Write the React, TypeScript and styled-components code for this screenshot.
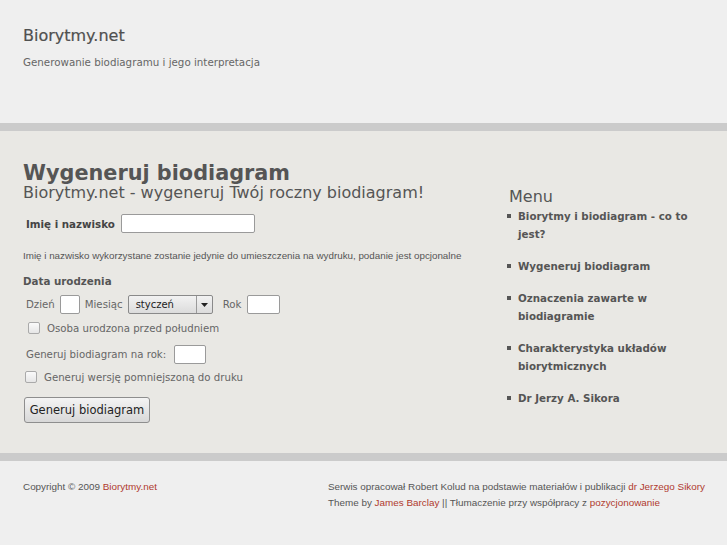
import React from "react";
import styled, { createGlobalStyle } from "styled-components";

const GlobalStyle = createGlobalStyle`
  html, body {
    margin: 0;
    padding: 0;
    background: #efefef;
    font-family: "DejaVu Sans", "Liberation Sans", sans-serif;
    color: #555;
  }
`;

const menuItems = [
  "Biorytmy i biodiagram - co to jest?",
  "Wygeneruj biodiagram",
  "Oznaczenia zawarte w biodiagramie",
  "Charakterystyka układów biorytmicznych",
  "Dr Jerzy A. Sikora",
];

export default function App() {
  return (
    <Page>
      <GlobalStyle />
      <Header>
        <SiteTitle>Biorytmy.net</SiteTitle>
        <SiteTagline>Generowanie biodiagramu i jego interpretacja</SiteTagline>
      </Header>

      <Main>
        <Content>
          <Title>Wygeneruj biodiagram</Title>
          <Subtitle>Biorytmy.net - wygeneruj Twój roczny biodiagram!</Subtitle>

          <NameRow>
            <BoldLabel>Imię i nazwisko</BoldLabel>
            <TextInput $width={134} />
          </NameRow>
          <Note>
            Imię i nazwisko wykorzystane zostanie jedynie do umieszczenia na wydruku, podanie jest opcjonalne
          </Note>

          <SectionLabel>Data urodzenia</SectionLabel>
          <FieldRow $top={8}>
            <Label>Dzień</Label>
            <TextInput $width={20} />
            <Label>Miesiąc</Label>
            <Select>
              <SelectValue>styczeń</SelectValue>
              <SelectArrow>
                <svg width="7" height="4" viewBox="0 0 7 4">
                  <path d="M0 0h7L3.5 4z" fill="#222" />
                </svg>
              </SelectArrow>
            </Select>
            <Label $gap={5}>Rok</Label>
            <TextInput $width={33} $gap={1} />
          </FieldRow>

          <CheckRow $indent={5} $top={8}>
            <Checkbox />
            <Label>Osoba urodzona przed południem</Label>
          </CheckRow>

          <FieldRow $top={11}>
            <Label>Generuj biodiagram na rok:</Label>
            <TextInput $width={32} $gap={3} />
          </FieldRow>

          <CheckRow $indent={2} $top={7}>
            <Checkbox />
            <Label>Generuj wersję pomniejszoną do druku</Label>
          </CheckRow>

          <Button>Generuj biodiagram</Button>
        </Content>

        <Sidebar>
          <MenuTitle>Menu</MenuTitle>
          <MenuList>
            {menuItems.map((item) => (
              <MenuItem key={item}>
                <Bullet />
                <MenuLink>{item}</MenuLink>
              </MenuItem>
            ))}
          </MenuList>
        </Sidebar>
      </Main>

      <Footer>
        <FooterText>
          Copyright © 2009 <FooterLink>Biorytmy.net</FooterLink>
        </FooterText>
        <FooterRight>
          <FooterText>
            Serwis opracował Robert Kolud na podstawie materiałów i publikacji{" "}
            <FooterLink>dr Jerzego Sikory</FooterLink>
          </FooterText>
          <FooterText>
            Theme by <FooterLink>James Barclay</FooterLink> || Tłumaczenie przy współpracy z{" "}
            <FooterLink>pozycjonowanie</FooterLink>
          </FooterText>
        </FooterRight>
      </Footer>
    </Page>
  );
}

const Page = styled.div`
  width: 727px;
  min-height: 545px;
  background: #efefef;
`;

const Header = styled.header`
  height: 97px;
  padding: 26px 23px 0;
  border-bottom: 8px solid #cbcbcb;
`;

const SiteTitle = styled.div`
  font-size: 16px;
  line-height: 19px;
  color: #505050;
  -webkit-text-stroke: 0.2px #505050;
`;

const SiteTagline = styled.div`
  margin-top: 11px;
  font-size: 10.3px;
  line-height: 12px;
  color: #666;
`;

const Main = styled.main`
  display: flex;
  background: #e9e8e4;
  height: 296px;
  padding: 26px 0 0 23px;
  border-bottom: 8px solid #cbcbcb;
`;

const Content = styled.div`
  width: 480px;
  padding-top: 4px;
  display: flex;
  flex-direction: column;
  align-items: flex-start;
`;

const Title = styled.h1`
  margin: 0;
  font-size: 20.8px;
  line-height: 24px;
  font-weight: bold;
  color: #555;
`;

const Subtitle = styled.h2`
  margin: -2px 0 0;
  font-size: 16px;
  line-height: 19px;
  font-weight: normal;
  color: #555;
`;

const NameRow = styled.div`
  display: flex;
  align-items: center;
  gap: 6px;
  margin: 12px 0 0 3px;
`;

const BoldLabel = styled.span`
  font-size: 10.3px;
  font-weight: bold;
  color: #444;
`;

const Label = styled.span<{ $gap?: number }>`
  font-size: 10.2px;
  color: #666;
  margin-left: ${(p) => p.$gap ?? 0}px;
`;

const TextInput = styled.span<{ $width: number; $gap?: number }>`
  display: inline-block;
  width: ${(p) => p.$width}px;
  height: 19px;
  margin-left: ${(p) => p.$gap ?? 0}px;
  box-sizing: border-box;
  background: #fff;
  border: 1px solid #9a9a9a;
  border-radius: 2px;
`;

const Note = styled.p`
  margin: 17px 0 0;
  font-family: "Liberation Sans", sans-serif;
  font-size: 9.8px;
  line-height: 12px;
  color: #555;
`;

const SectionLabel = styled.div`
  margin-top: 13px;
  font-size: 10.3px;
  line-height: 12px;
  font-weight: bold;
  color: #555;
`;

const FieldRow = styled.div<{ $top: number }>`
  display: flex;
  align-items: center;
  gap: 5px;
  margin: ${(p) => p.$top}px 0 0 3px;
`;

const Select = styled.span`
  display: inline-flex;
  width: 85px;
  height: 19px;
  box-sizing: border-box;
  border: 1px solid #8a8a8a;
  border-radius: 2px;
  background: linear-gradient(#f2f2f2, #dcdcdc);
`;

const SelectValue = styled.span`
  flex: 1;
  padding-left: 7px;
  font-size: 10px;
  line-height: 17px;
  color: #222;
`;

const SelectArrow = styled.span`
  width: 15px;
  display: flex;
  align-items: center;
  justify-content: center;
  border-left: 1px solid #9a9a9a;
`;

const CheckRow = styled.label<{ $indent: number; $top: number }>`
  display: flex;
  align-items: center;
  gap: 7px;
  margin: ${(p) => p.$top}px 0 0 ${(p) => p.$indent}px;
`;

const Checkbox = styled.span`
  display: inline-block;
  width: 12px;
  height: 12px;
  box-sizing: border-box;
  border: 1px solid #aaa;
  border-radius: 2px;
  background: linear-gradient(#fafafa, #e6e6e6);
`;

const Button = styled.button`
  margin: 14px 0 0 1px;
  width: 126px;
  height: 26px;
  padding: 0;
  font-family: "DejaVu Sans", sans-serif;
  font-size: 11.5px;
  color: #222;
  border: 1px solid #8e8e8e;
  border-radius: 3px;
  background: linear-gradient(#f4f4f4, #d8d8d8);
`;

const Sidebar = styled.aside`
  padding-left: 4px;
  padding-top: 30px;
`;

const MenuTitle = styled.h3`
  margin: 0 0 0 2px;
  font-size: 16px;
  line-height: 19px;
  font-weight: normal;
  color: #555;
`;

const MenuList = styled.ul`
  list-style: none;
  margin: 1px 0 0;
  padding: 0;
  width: 190px;
`;

const MenuItem = styled.li`
  display: flex;
  margin-bottom: 14px;
`;

const Bullet = styled.span`
  flex: none;
  width: 4px;
  height: 4px;
  margin: 7px 7px 0 0;
  background: #555;
`;

const MenuLink = styled.span`
  font-size: 10.3px;
  line-height: 18px;
  font-weight: bold;
  color: #555;
`;

const Footer = styled.footer`
  display: flex;
  justify-content: space-between;
  align-items: flex-start;
  padding: 20px 22px 0 23px;
`;

const FooterRight = styled.div`
  display: flex;
  flex-direction: column;
  gap: 4px;
`;

const FooterText = styled.div`
  font-family: "Liberation Sans", sans-serif;
  font-size: 9.9px;
  line-height: 12px;
  color: #555;
  white-space: nowrap;
`;

const FooterLink = styled.a`
  color: #b03a2e;
  text-decoration: none;
`;
